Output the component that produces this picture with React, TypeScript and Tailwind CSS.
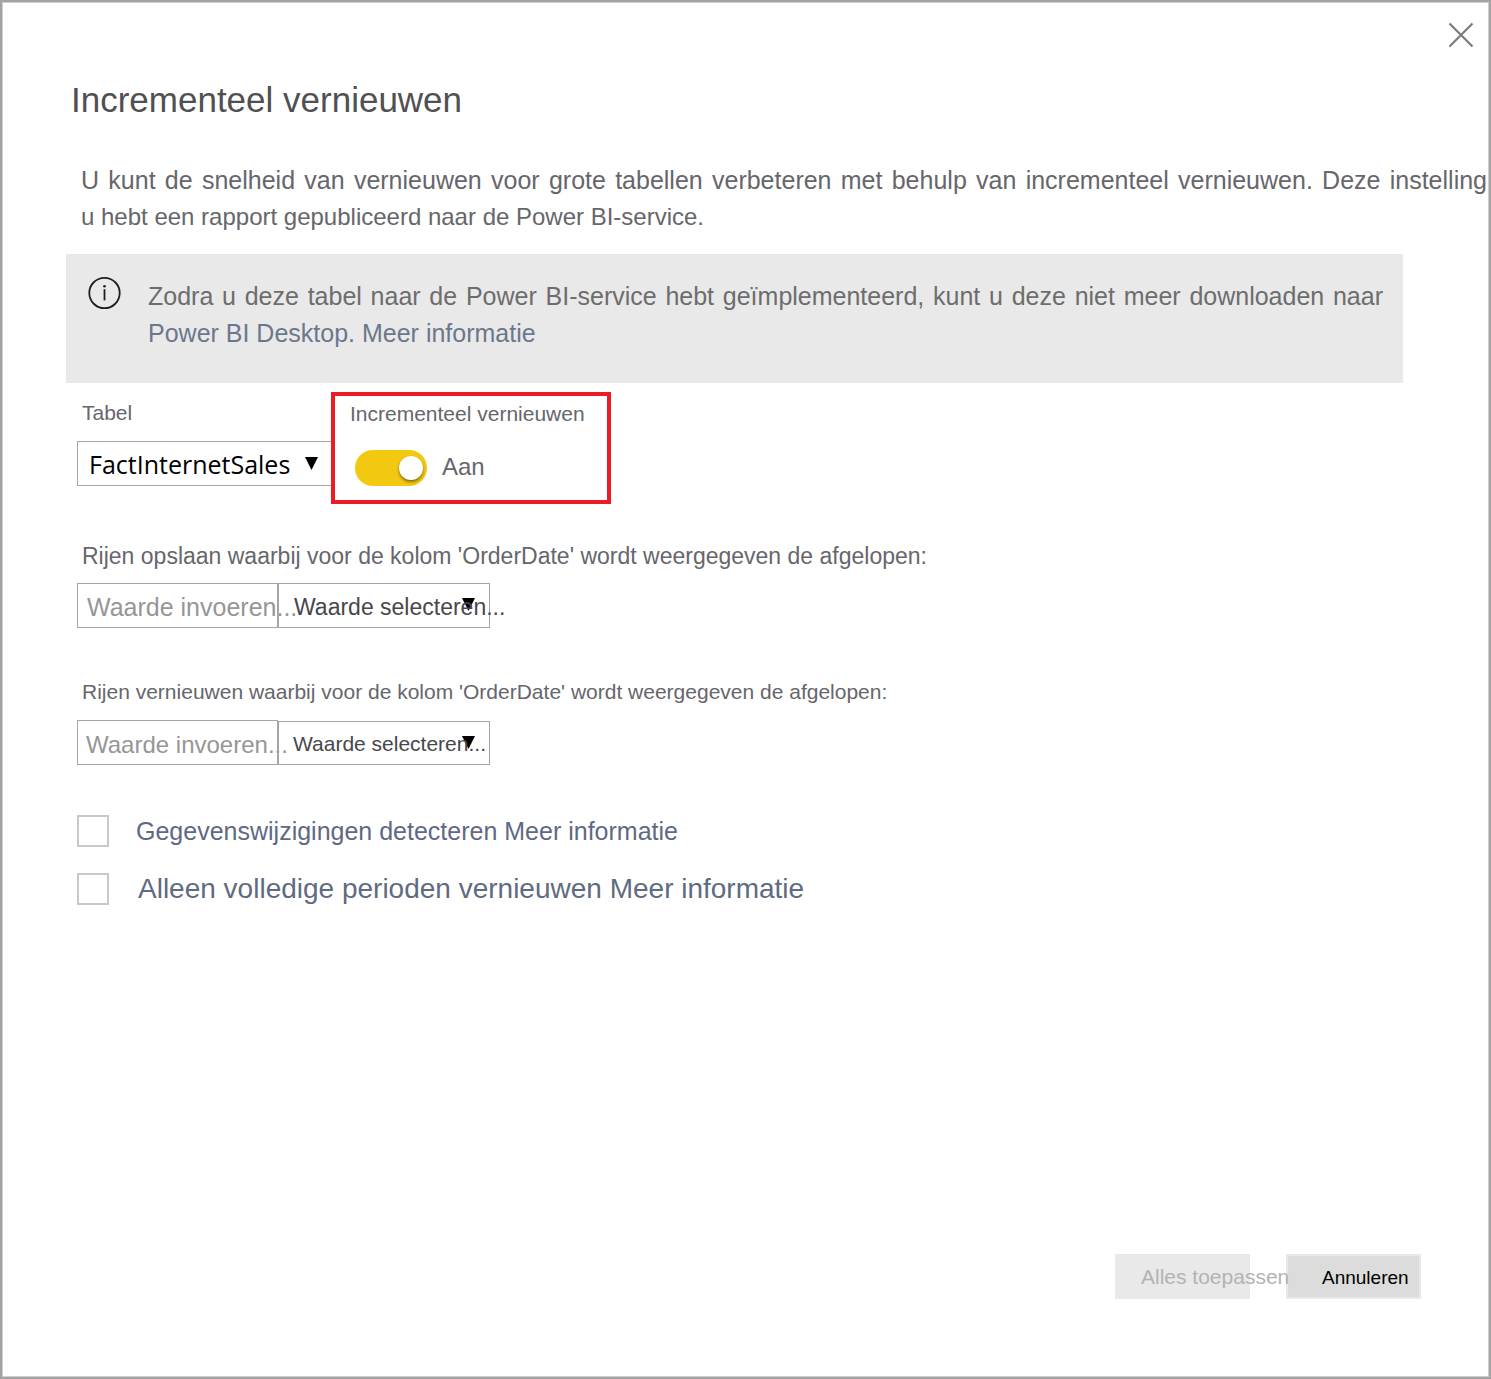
import { useState } from "react";
import type { ReactNode } from "react";

const INPUT_BOX = "flex h-[45px] w-[201px] border border-[#a6a6a6]";
const SELECT_BOX = "relative flex w-[212px] border border-[#a6a6a6]";

function CloseIcon() {
  return (
    <svg width="26" height="26" viewBox="0 0 26 26" fill="none" stroke="#7b7b7b" strokeWidth="2.2" aria-hidden="true">
      <path d="M1.5 1.5 24.5 24.5M24.5 1.5 1.5 24.5" />
    </svg>
  );
}

function InfoIcon() {
  return (
    <svg className="shrink-0" width="34" height="34" viewBox="0 0 34 34" fill="none" aria-hidden="true">
      <circle cx="17.5" cy="17" r="15.2" stroke="#1f1f1f" strokeWidth="1.8" />
      <path d="M17.5 13.2V24.4" stroke="#1f1f1f" strokeWidth="1.8" />
      <circle cx="17.5" cy="10.2" r="1.3" fill="#1f1f1f" />
    </svg>
  );
}

function Arrow({ className }: { className: string }) {
  return (
    <svg className={className} width="13" height="13" viewBox="0 0 13 13" aria-hidden="true">
      <path d="M0 0H13L6.5 13Z" fill="#000" />
    </svg>
  );
}

function ValueRow({
  id,
  label,
  labelClass,
  inputClass,
  selectClass,
  selectHeight,
}: {
  id: string;
  label: string;
  labelClass: string;
  inputClass: string;
  selectClass: string;
  selectHeight: string;
}) {
  return (
    <section className="flex flex-col">
      <label htmlFor={id + "-value"} className={labelClass}>
        {label}
      </label>
      <div className="flex items-end">
        <div className={INPUT_BOX}>
          <input
            id={id + "-value"}
            type="text"
            placeholder="Waarde invoeren..."
            className={inputClass}
          />
        </div>
        <div className={SELECT_BOX + " " + selectHeight}>
          <Arrow className="pointer-events-none absolute top-[14px] right-[14px]" />
          <select id={id + "-unit"} aria-label={label} className={selectClass} defaultValue="">
            <option value="">Waarde selecteren...</option>
            <option value="d">Dagen</option>
            <option value="m">Maanden</option>
            <option value="j">Jaren</option>
          </select>
        </div>
      </div>
    </section>
  );
}

function CheckRow({ id, className, children }: { id: string; className: string; children: ReactNode }) {
  return (
    <div className="flex h-8 items-center">
      <input
        id={id}
        type="checkbox"
        className="size-8 shrink-0 appearance-none border-2 border-[#c8c8c8] bg-white checked:bg-[#f2c811]"
      />
      <label htmlFor={id} className={className}>
        {children}{" "}
        <a href="#info">Meer informatie</a>
      </label>
    </div>
  );
}

export default function App() {
  const [on, setOn] = useState(true);
  return (
    <main className="flex min-h-screen flex-col overflow-hidden border-2 border-[#a3a3a3] bg-white font-['Liberation_Sans',Arial,sans-serif] text-[#66666b] shadow-[inset_0_0_0_1px_#cfcfcf]">
      <header className="flex flex-col">
        <button type="button" aria-label="Sluiten" className="mt-5 mr-[15px] self-end">
          <CloseIcon />
        </button>
        <h1 className="mt-8 ml-[69px] text-[35px] leading-10 text-[#505052]">Incrementeel vernieuwen</h1>
      </header>

      <p className="mt-[42px] mr-[2px] ml-[79px] text-justify text-[25px] leading-9">
        U kunt de snelheid van vernieuwen voor grote tabellen verbeteren met behulp van incrementeel vernieuwen. Deze
        instelling <span className="text-[24px]">u&nbsp;hebt&nbsp;een rapport gepubliceerd naar de Power BI-service.</span>
      </p>

      <div className="mt-[19px] mr-[86px] ml-16 flex h-[129px] items-start bg-[#e9e9e9] pr-5 pl-[21px]">
        <div className="mt-[22px]">
          <InfoIcon />
        </div>
        <p className="mt-6 ml-[27px] flex-1 text-justify text-[25px] leading-[37px] text-[#6d6d6d]">
          Zodra u deze tabel naar de Power BI-service hebt geïmplementeerd, kunt u deze niet meer downloaden naar{" "}
          <span className="text-[#6c778c]">
            Power BI Desktop. <a href="#info">Meer informatie</a>
          </span>
        </p>
      </div>

      <div className="mt-[9px] ml-[75px] flex items-start">
        <div className="flex w-[254px] flex-col pt-[9px]">
          <label htmlFor="table" className="ml-[5px] text-[21px] leading-6">
            Tabel
          </label>
          <div className="relative mt-4 flex h-[45px] border border-r-0 border-[#a6a6a6]">
            <select
              id="table"
              className="w-full appearance-none bg-transparent pl-[11px] font-['Open_Sans',sans-serif] text-[25px] leading-8 text-black"
            >
              <option>FactInternetSales</option>
            </select>
            <Arrow className="pointer-events-none absolute top-[15px] right-[13px]" />
          </div>
        </div>
        <div className="flex h-28 w-[280px] flex-col border-4 border-[#ec1c24] pt-[6px] pl-[15px]">
          <span id="refresh" className="text-[21px] leading-6">
            Incrementeel vernieuwen
          </span>
          <div className="mt-6 ml-[5px] flex items-center">
            <button
              type="button"
              role="switch"
              aria-checked={on}
              aria-labelledby="refresh"
              onClick={() => setOn(!on)}
              className={
                on
                  ? "flex h-9 w-18 items-center justify-end rounded-full bg-[#f2c811] pr-1"
                  : "flex h-9 w-18 items-center justify-start rounded-full bg-[#a6a6a6] pl-1"
              }
            >
              <span className="size-6 rounded-full bg-white shadow-[0_2px_3px_rgba(0,0,0,0.45)]" />
            </button>
            <span className="ml-[15px] pb-[2px] text-[24px] leading-8">{on ? "Aan" : "Uit"}</span>
          </div>
        </div>
      </div>

      <div className="mt-[38px] ml-[75px] flex flex-col gap-[52px]">
        <ValueRow
          id="store"
          label="Rijen opslaan waarbij voor de kolom 'OrderDate' wordt weergegeven de afgelopen:"
          labelClass="mb-[13px] ml-[5px] text-[23px] leading-7"
          inputClass="w-[230px] shrink-0 bg-transparent pt-[2px] pl-[9px] text-[25px] leading-8 outline-none placeholder:text-[#969696]"
          selectClass="relative w-[240px] shrink-0 appearance-none bg-transparent pt-[2px] pl-[15px] text-[23px] leading-8 text-[#47474b]"
          selectHeight="h-[45px]"
        />
        <ValueRow
          id="renew"
          label="Rijen vernieuwen waarbij voor de kolom 'OrderDate' wordt weergegeven de afgelopen:"
          labelClass="mb-4 ml-[5px] text-[21px] leading-6"
          inputClass="w-[230px] shrink-0 bg-transparent pt-1 pl-2 text-[24px] leading-8 outline-none placeholder:text-[#969696]"
          selectClass="relative w-[240px] shrink-0 appearance-none bg-transparent pt-[2px] pl-[14px] text-[21px] leading-8 text-[#47474b]"
          selectHeight="h-11"
        />
      </div>

      <div className="mt-[50px] ml-[75px] flex flex-col gap-[26px]">
        <CheckRow id="detect" className="ml-[27px] text-[25px] leading-8 text-[#5f6985]">
          Gegevenswijzigingen detecteren
        </CheckRow>
        <CheckRow id="complete" className="ml-[29px] text-[28px] leading-8 text-[#5f6b80]">
          Alleen volledige perioden vernieuwen
        </CheckRow>
      </div>

      <footer className="mt-auto mr-[68px] mb-[78px] flex justify-end gap-9 pt-10">
        <button
          type="button"
          disabled
          className="h-[45px] w-[135px] bg-[#e9e9e9] pl-[26px] text-left text-[21px] leading-6 whitespace-nowrap text-[#b3b3b3]"
        >
          <span className="relative z-10">Alles toepassen</span>
        </button>
        <button
          type="button"
          className="h-[45px] w-[135px] border-2 border-[#e9e9e9] bg-[#dcdcdc] pt-[2px] pl-[34px] text-left text-[19px] leading-6 text-black"
        >
          Annuleren
        </button>
      </footer>
    </main>
  );
}
